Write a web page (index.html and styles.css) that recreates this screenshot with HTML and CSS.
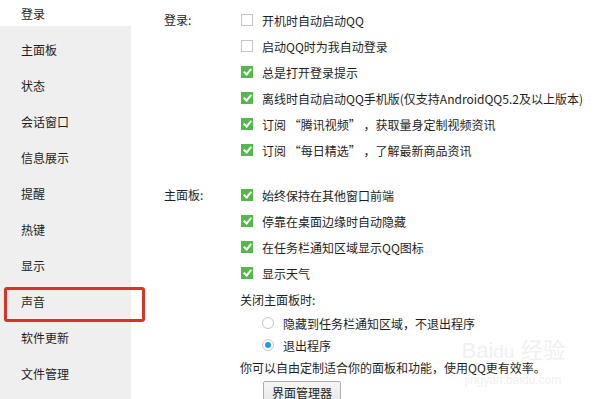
FILE: index.html
```html
<!DOCTYPE html>
<html lang="zh-CN">
<head>
<meta charset="UTF-8">
<title>系统设置</title>
<link rel="stylesheet" href="styles.css">
</head>
<body>
<div class="win">
    <div class="side">
        <div class="nav-cur">登录</div>
        <ul class="nav">
            <li>主面板</li>
            <li>状态</li>
            <li>会话窗口</li>
            <li>信息展示</li>
            <li>提醒</li>
            <li>热键</li>
            <li>显示</li>
            <li class="hl">声音</li>
            <li>软件更新</li>
            <li>文件管理</li>
        </ul>
    </div>

    <div class="main">
        <div class="sec">
            <div class="lbl">登录:</div>
            <div class="opts">
                <div class="row"><span class="cb"></span>开机时自动启动QQ</div>
                <div class="row"><span class="cb"></span>启动QQ时为我自动登录</div>
                <div class="row"><span class="cb on"></span>总是打开登录提示</div>
                <div class="row"><span class="cb on"></span>离线时自动启动QQ手机版(仅支持AndroidQQ5.2及以上版本)</div>
                <div class="row"><span class="cb on"></span>订阅 “腾讯视频” ，获取量身定制视频资讯</div>
                <div class="row"><span class="cb on"></span>订阅 “每日精选” ，了解最新商品资讯</div>
            </div>
        </div>

        <div class="sec sec2">
            <div class="lbl">主面板:</div>
            <div class="opts">
                <div class="row"><span class="cb on"></span>始终保持在其他窗口前端</div>
                <div class="row"><span class="cb on"></span>停靠在桌面边缘时自动隐藏</div>
                <div class="row"><span class="cb on"></span>在任务栏通知区域显示QQ图标</div>
                <div class="row"><span class="cb on"></span>显示天气</div>
            </div>
        </div>

        <div class="close-box">
            <div class="row">关闭主面板时:</div>
            <div class="rrow"><span class="rd"></span>隐藏到任务栏通知区域，不退出程序</div>
            <div class="rrow"><span class="rd on"></span>退出程序</div>
            <div class="rrow tip">你可以自由定制适合你的面板和功能，使用QQ更有效率。</div>
            <div class="btn">界面管理器</div>
        </div>

        <div class="wm">
            <div class="wm-big">Bai<span>du</span> 经验</div>
            <div class="wm-small">jingyan.baidu.com</div>
        </div>
    </div>
</div>
</body>
</html>
```

FILE: styles.css
```css
body {
    margin: 0;
    background: #fff;
    font-family: "Noto Sans CJK SC", "Noto Sans", sans-serif;
    font-size: 12px;
    color: #1e1e1e;
}

.win {
    display: flex;
    height: 399px;
    overflow: hidden;
}

.side {
    width: 131px;
    flex: none;
    display: flex;
    flex-direction: column;
}

.nav-cur {
    height: 26px;
    line-height: 28px;
    padding-left: 21px;
    background: #fff;
}

.nav {
    flex: 1;
    list-style: none;
    margin: 0;
    padding: 6px 0 0 0;
    background: #efefef;
}

.nav li {
    height: 36px;
    line-height: 36px;
    padding-left: 21px;
    position: relative;
}

/* red annotation box */
.nav .hl::after {
    content: "";
    position: absolute;
    left: 4px;
    top: 3px;
    width: 135px;
    height: 29px;
    border: 3px solid #dc3127;
    border-radius: 3px;
}

.main {
    flex: 1;
    padding: 7px 0 0 33px;
    position: relative;
}

.sec {
    display: flex;
}

.sec2 {
    margin-top: 19px;
}

.lbl {
    width: 77px;
    flex: none;
    height: 26px;
    line-height: 26px;
}

.row {
    height: 26px;
    display: flex;
    align-items: center;
    white-space: nowrap;
}

.cb {
    width: 10px;
    height: 10px;
    border: 1px solid #c4c4c4;
    background: #fff;
    margin-right: 9px;
    flex: none;
    position: relative;
}

.cb.on {
    background: #54b94a;
    border-color: #54b94a;
}

.cb.on::after {
    content: "";
    position: absolute;
    left: 3px;
    top: 0px;
    width: 3px;
    height: 6px;
    border: solid #fff;
    border-width: 0 2px 2px 0;
    transform: rotate(40deg);
}

.close-box {
    padding-left: 76px;
}

.rrow {
    height: 22px;
    display: flex;
    align-items: center;
    padding-left: 22px;
    white-space: nowrap;
}

.rrow.tip {
    padding-left: 0;
}

.rd {
    width: 10px;
    height: 10px;
    border: 1px solid #c8c8c8;
    border-radius: 50%;
    background: #fff;
    margin-right: 9px;
    flex: none;
    position: relative;
}

.rd.on::after {
    content: "";
    position: absolute;
    left: 2px;
    top: 2px;
    width: 6px;
    height: 6px;
    border-radius: 50%;
    background: #1a9fe8;
}

.btn {
    margin: 3px 0 0 23px;
    width: 78px;
    height: 24px;
    line-height: 22px;
    text-align: center;
    border: 1px solid #adadad;
    border-radius: 2px;
    background: linear-gradient(#f6f6f6, #e6e6e6);
    box-sizing: border-box;
}

/* faint baidu watermark */
.wm {
    position: absolute;
    left: 327px;
    top: 338px;
    width: 110px;
    color: #f0f0f0;
    font-family: "Liberation Sans", sans-serif;
    text-align: center;
    white-space: nowrap;
    pointer-events: none;
}

.wm-big {
    font-size: 22px;
    line-height: 26px;
}

.wm-big span {
    font-size: 19px;
}

.wm-small {
    font-size: 12px;
    line-height: 14px;
    margin-top: 8px;
}
```
